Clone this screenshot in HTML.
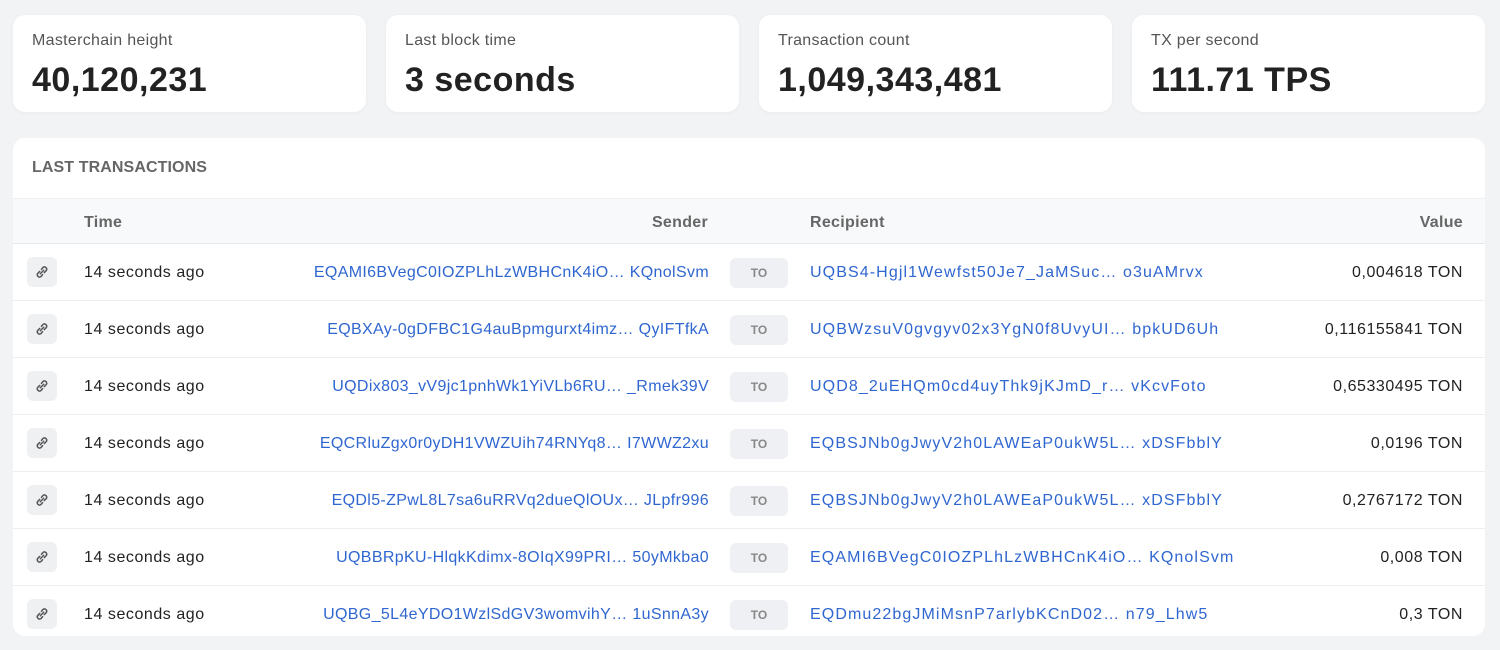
<!DOCTYPE html>
<html><head><meta charset="utf-8"><style>
*{box-sizing:border-box;margin:0;padding:0}
body{width:1500px;height:650px;background:#f2f3f5;font-family:"Liberation Sans",sans-serif;position:relative;overflow:hidden;color:#222}
.card{position:absolute;top:15px;height:97px;width:353px;background:#fff;border-radius:12px;box-shadow:0 1px 4px rgba(0,0,0,.04)}
.card .l{position:absolute;left:19px;top:17px;font-size:16px;color:#555;letter-spacing:0.3px}
.card .v{position:absolute;left:19px;top:46px;font-size:34px;font-weight:bold;color:#222;letter-spacing:0.5px}
.tbl{position:absolute;left:13px;top:138px;width:1472px;height:498px;background:#fff;border-radius:12px;overflow:hidden}
.tt{position:absolute;left:19px;top:21px;font-size:16px;font-weight:bold;color:#666;letter-spacing:0.1px}
.hd{position:absolute;left:0;top:60px;width:100%;height:46px;background:#f8f9fa;border-top:1px solid #eef0f2;border-bottom:1px solid #e6e8eb;font-size:16px;font-weight:bold;color:#666;letter-spacing:0.3px}
.hd span,.row span{position:absolute;top:1px;line-height:45px;white-space:nowrap}
.row{position:absolute;left:0;width:100%;height:57px;border-bottom:1px solid #eceef0;font-size:16px;letter-spacing:0.55px}
.row span{line-height:58px;top:0}
.row .a{letter-spacing:0.35px}
.row .rc{letter-spacing:1.1px}
.ic{position:absolute;left:14px;top:13px;width:30px;height:30px;background:#eff0f2;border-radius:6px}
.ic svg{position:absolute;left:7px;top:7px}
.to{position:absolute;left:717px;top:14px;width:58px;height:30px;background:#eef0f3;border-radius:6px;font-size:12px;font-weight:bold;color:#888;text-align:center;line-height:30px;letter-spacing:0}
.a{color:#2f66d0}
</style></head><body>
<div class="card" style="left:13px"><div class="l">Masterchain height</div><div class="v">40,120,231</div></div>
<div class="card" style="left:386px"><div class="l">Last block time</div><div class="v">3 seconds</div></div>
<div class="card" style="left:759px"><div class="l">Transaction count</div><div class="v">1,049,343,481</div></div>
<div class="card" style="left:1132px"><div class="l">TX per second</div><div class="v">111.71 TPS</div></div>
<div class="tbl">
<div class="tt">LAST TRANSACTIONS</div>
<div class="hd"><span style="left:71px">Time</span><span style="right:777px">Sender</span><span style="left:797px">Recipient</span><span style="right:22px">Value</span></div>
</div>
<script>
const rows=[
["EQAMI6BVegC0IOZPLhLzWBHCnK4iO… KQnolSvm","UQBS4-Hgjl1Wewfst50Je7_JaMSuc… o3uAMrvx","0,004618 TON"],
["EQBXAy-0gDFBC1G4auBpmgurxt4imz… QyIFTfkA","UQBWzsuV0gvgyv02x3YgN0f8UvyUI… bpkUD6Uh","0,116155841 TON"],
["UQDix803_vV9jc1pnhWk1YiVLb6RU… _Rmek39V","UQD8_2uEHQm0cd4uyThk9jKJmD_r… vKcvFoto","0,65330495 TON"],
["EQCRluZgx0r0yDH1VWZUih74RNYq8… I7WWZ2xu","EQBSJNb0gJwyV2h0LAWEaP0ukW5L… xDSFbblY","0,0196 TON"],
["EQDl5-ZPwL8L7sa6uRRVq2dueQlOUx… JLpfr996","EQBSJNb0gJwyV2h0LAWEaP0ukW5L… xDSFbblY","0,2767172 TON"],
["UQBBRpKU-HlqkKdimx-8OIqX99PRI… 50yMkba0","EQAMI6BVegC0IOZPLhLzWBHCnK4iO… KQnolSvm","0,008 TON"],
["UQBG_5L4eYDO1WzlSdGV3womvihY… 1uSnnA3y","EQDmu22bgJMiMsnP7arlybKCnD02… n79_Lhw5","0,3 TON"]];
const t=document.querySelector('.tbl');
const svg='<svg width="16" height="16" viewBox="0 0 14 14" fill="none" stroke="#555" stroke-width="1.3" stroke-linecap="round"><path d="M5.5 8.5l3-3M5 6.5L3.3 8.2a2 2 0 002.8 2.8L7.5 9.3M9 7.5l1.7-1.7a2 2 0 00-2.8-2.8L6.5 4.7"/></svg>';
rows.forEach((r,i)=>{const d=document.createElement('div');d.className='row';d.style.top=(106+57*i)+'px';
d.innerHTML='<div class="ic">'+svg+'</div><span style="left:71px">14 seconds ago</span><span class="a" style="right:776px">'+r[0]+'</span><div class="to">TO</div><span class="a rc" style="left:797px">'+r[1]+'</span><span style="right:22px">'+r[2]+'</span>';
t.appendChild(d);});
</script>
</body></html>
